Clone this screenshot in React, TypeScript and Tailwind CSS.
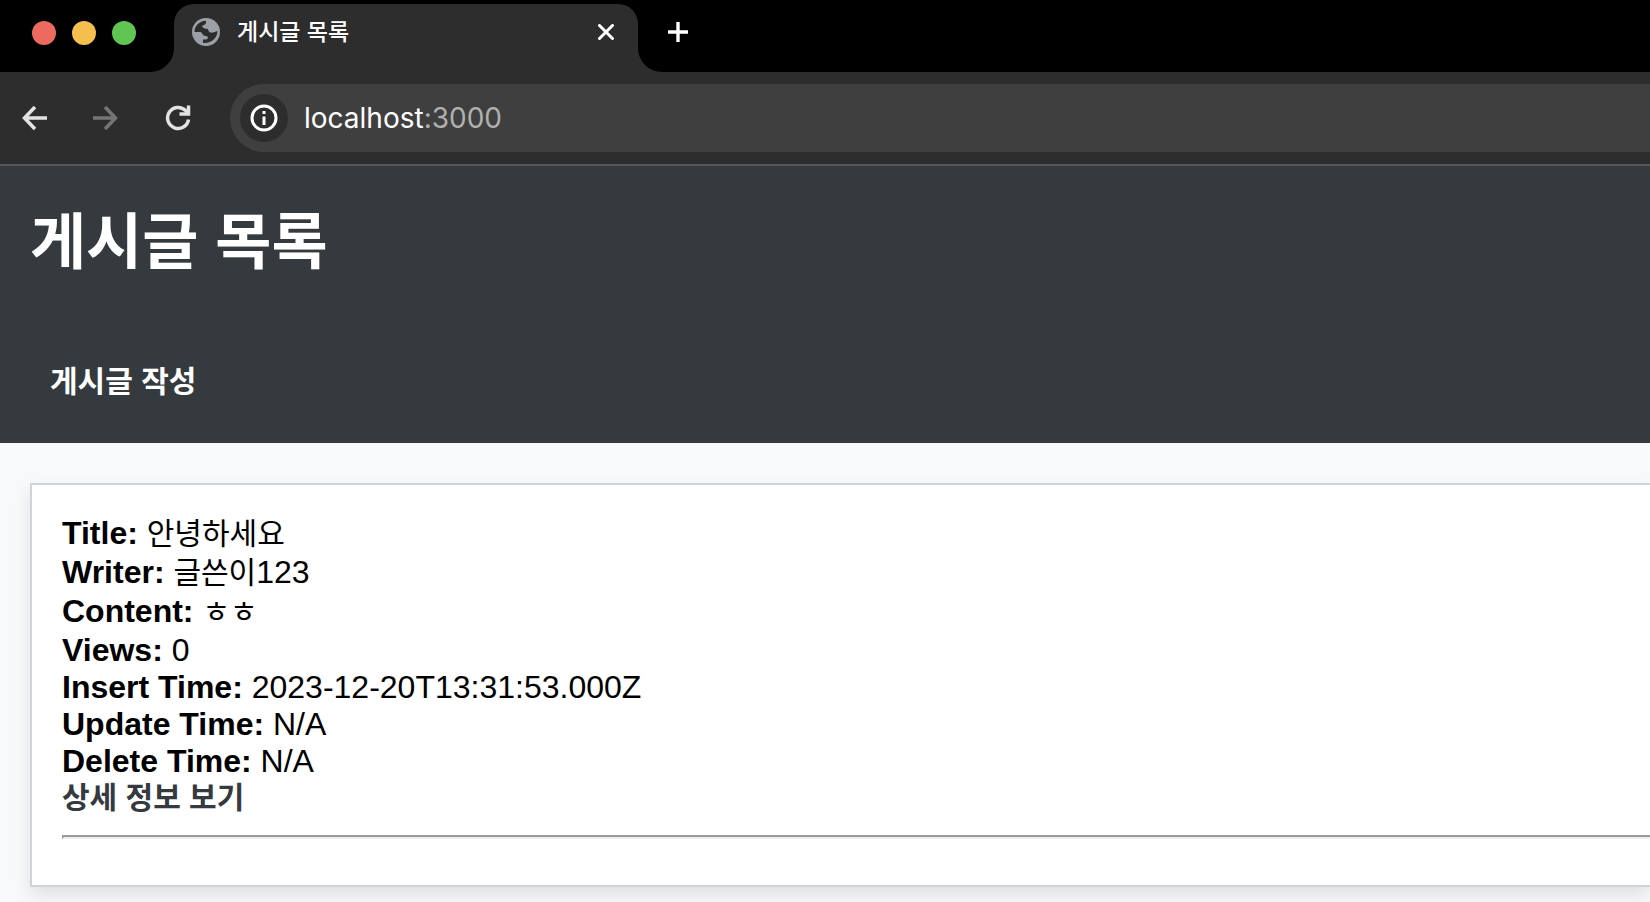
import { ReactNode } from "react";

type Post = {
  title: string;
  writer: string;
  content: string;
  views: number;
  insertTime: string;
  updateTime?: string;
  deleteTime?: string;
};

const posts: Post[] = [
  {
    title: "안녕하세요",
    writer: "글쓴이123",
    content: "ㅎㅎ",
    views: 0,
    insertTime: "2023-12-20T13:31:53.000Z",
  },
];

const lights = ["bg-[#ed6a5e]", "bg-[#f5bf4f]", "bg-[#61c554]"];

function GlobeIcon() {
  return (
    <svg className="size-7 shrink-0" viewBox="0 0 28 28" aria-hidden="true">
      <circle cx="14" cy="14" r="14" fill="#9aa0a6" />
      <path
        d="M2.500 14C2.500 8 7 3 14 2.700V4.500C14 6.500 12 6.500 10.500 7.500C9.500 9.500 12 10.500 15 10.800C17 11.500 16 14 18.500 14.500C21 15 23 14 25.500 13C25.500 20 19 25.800 11 25V21.500H14C16.500 21.500 16.500 18 14 18C10 18 11 14.500 8 14Z"
        fill="#2d2d2d"
      />
    </svg>
  );
}

function TabStrip() {
  return (
    <div className="flex h-18 items-end bg-black">
      <div className="flex h-full items-center gap-4 pr-[14px] pl-8 pb-[6px]">
        {lights.map((color) => (
          <span key={color} className={`size-6 rounded-full ${color}`} />
        ))}
      </div>
      <svg className="size-6 shrink-0 text-[#2d2d2d]" viewBox="0 0 24 24" aria-hidden="true">
        <path d="M24 0v24H0A24 24 0 0 0 24 0Z" fill="currentColor" />
      </svg>
      <div className="flex h-[68px] w-[464px] items-center rounded-t-[20px] bg-[#2d2d2d] pr-6 pb-3 pl-[18px]">
        <GlobeIcon />
        <span className="ml-[17px] flex-1 text-[23px] font-medium text-white">게시글 목록</span>
        <button aria-label="Close tab" className="text-white">
          <svg className="size-4" viewBox="0 0 16 16" fill="none" stroke="currentColor" strokeWidth="3">
            <path d="M1.500 1.500l13 13M14.500 1.500l-13 13" strokeLinecap="round" />
          </svg>
        </button>
      </div>
      <svg className="size-6 shrink-0 text-[#2d2d2d]" viewBox="0 0 24 24" aria-hidden="true">
        <path d="M0 0v24h24A24 24 0 0 1 0 0Z" fill="currentColor" />
      </svg>
      <button aria-label="New tab" className="mb-[30px] ml-[6px] text-white">
        <svg className="size-5" viewBox="0 0 20 20" fill="none" stroke="currentColor" strokeWidth="3.400">
          <path d="M10 0v20M0 10h20" />
        </svg>
      </button>
    </div>
  );
}

function Toolbar() {
  return (
    <div className="flex items-center border-b-2 border-[#565656] bg-[#2d2d2d] py-3 pl-[22px]">
      <button aria-label="Back" className="text-[#e3e3e3]">
        <svg className="size-[26px]" viewBox="0 0 26 26" fill="none" stroke="currentColor" strokeWidth="3.500">
          <path d="M25 13H3M13 2L2.500 13 13 24" />
        </svg>
      </button>
      <button aria-label="Forward" className="ml-[45px] text-[#757575]">
        <svg className="size-[26px]" viewBox="0 0 26 26" fill="none" stroke="currentColor" strokeWidth="3.500">
          <path d="M0 13h22M12 2l10.500 11L12 24" />
        </svg>
      </button>
      <button aria-label="Reload" className="ml-[46px] text-[#e3e3e3]">
        <svg className="size-[26px]" viewBox="0 0 26 26" fill="none" stroke="currentColor" strokeWidth="3.500">
          <path d="M23.500 14.500A10.500 10.500 0 1 1 20.500 5.500L23 8.500" />
          <path d="M23.500 0.500V9H14.500" />
        </svg>
      </button>
      <div className="ml-[39px] flex h-[68px] flex-1 items-center rounded-l-full bg-[#3f3f3f] pl-[10px]">
        <button
          aria-label="View site information"
          className="flex size-12 items-center justify-center rounded-full bg-[#2d2d2d] text-white"
        >
          <svg className="size-7" viewBox="0 0 28 28" fill="none" stroke="currentColor" strokeWidth="3">
            <circle cx="14" cy="14" r="12" />
            <path d="M14 12.500V21M14 7v3" />
          </svg>
        </button>
        <span className="ml-4 font-[Inter,sans-serif] text-[28px] text-white">
          localhost<span className="text-[#b0b0b0]">:3000</span>
        </span>
      </div>
    </div>
  );
}

// Hangul is set two pixels smaller than the Latin text beside it
function Ko({ children }: { children: ReactNode }) {
  return <span className="text-[30px]">{children}</span>;
}

function Row({ label, tall, children }: { label: string; tall?: boolean; children: ReactNode }) {
  return (
    <p className={tall ? "pb-[2px]" : ""}>
      <strong>{label}:</strong> {children}
    </p>
  );
}

function PostCard({ post }: { post: Post }) {
  return (
    <li className="border-2 border-r-0 border-[#ced4da] bg-white py-[30px] pl-[30px] shadow-[0_8px_16px_rgba(0,0,0,0.1)]">
      <div className="text-[32px] leading-[37px] text-black">
        <Row label="Title" tall>
          <Ko>{post.title}</Ko>
        </Row>
        <Row label="Writer" tall>
          <Ko>{post.writer.replace(/\d+$/, "")}</Ko>
          {post.writer.match(/\d+$/)?.[0]}
        </Row>
        <Row label="Content" tall>
          <Ko>{post.content}</Ko>
        </Row>
        <Row label="Views">{post.views}</Row>
        <Row label="Insert Time">{post.insertTime}</Row>
        <Row label="Update Time">{post.updateTime ?? "N/A"}</Row>
        <Row label="Delete Time">{post.deleteTime ?? "N/A"}</Row>
        <a href="#detail" className="block pb-1 text-[30px] leading-[35px] font-bold text-[#343a40]">
          상세 정보 보기
        </a>
      </div>
      <hr className="my-4 border-t-2 border-b-2 border-l-2 border-t-[#9a9a9a] border-b-[#eeeeee] border-l-[#9a9a9a]" />
    </li>
  );
}

export default function App() {
  return (
    <div className="flex min-h-screen flex-col overflow-hidden bg-[#f8f9fb] font-['Liberation_Sans','Noto_Sans_CJK_KR',sans-serif]">
      <TabStrip />
      <Toolbar />
      <header className="bg-[#353a3e] px-[30px] pt-10 pb-[42px] text-white">
        <h1 className="text-[61px] leading-[74px] font-bold">게시글 목록</h1>
        <nav className="mt-[82px] px-5">
          <a href="#write" className="block text-[30px] leading-[39px] font-bold">
            게시글 작성
          </a>
        </nav>
      </header>
      <ul className="pt-10 pl-[30px]">
        {posts.map((post) => (
          <PostCard key={post.insertTime} post={post} />
        ))}
      </ul>
    </div>
  );
}
